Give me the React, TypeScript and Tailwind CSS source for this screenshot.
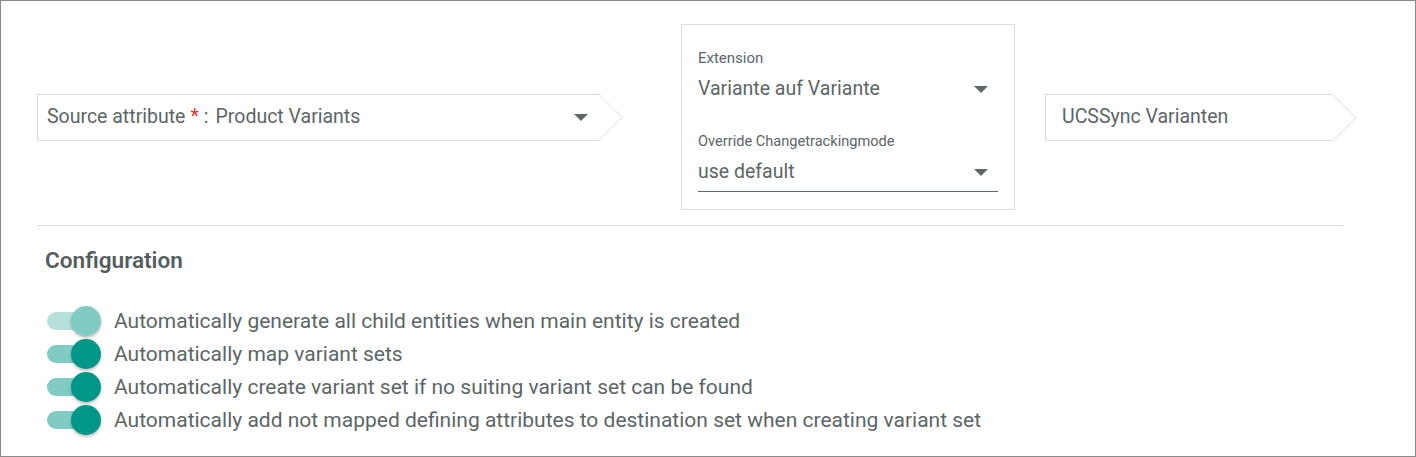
const font = { fontFamily: "Roboto, 'Liberation Sans', sans-serif" };

function Caret() {
  return (
    <svg width="14" height="7" viewBox="0 0 14 7" className="shrink-0">
      <path d="M0 0 L14 0 L7 7 Z" fill="#5f6868" />
    </svg>
  );
}

function ArrowBox({ width, children }: { width: string; children: React.ReactNode }) {
  return (
    <div className={`flex h-[47px] shrink-0 ${width}`}>
      <div className="flex flex-1 items-center border-y border-l border-[#dcdcdc] bg-white">
        {children}
      </div>
      <svg width="25" height="47" viewBox="0 0 25 47" className="shrink-0">
        <path d="M0 0.5 L1 0.5 L24 23.5 L1 46.5 L0 46.5" fill="none" stroke="#dcdcdc" strokeWidth="1" />
      </svg>
    </div>
  );
}

function Toggle({ muted }: { muted?: boolean }) {
  return (
    <div className="relative h-[30px] w-[54px] shrink-0">
      <div
        className={`absolute left-0 top-[6px] h-[18px] w-[48px] rounded-full ${
          muted ? "bg-[#b5e0dc]" : "bg-[#80cbc4]"
        }`}
      />
      <div
        className={`absolute left-[24px] top-0 h-[30px] w-[30px] rounded-full shadow-[0_2px_3px_rgba(0,0,0,0.25)] ${
          muted ? "bg-[#80cbc4]" : "bg-[#009688]"
        }`}
      />
    </div>
  );
}

const options = [
  { label: "Automatically generate all child entities when main entity is created", muted: true },
  { label: "Automatically map variant sets" },
  { label: "Automatically create variant set if no suiting variant set can be found" },
  { label: "Automatically add not mapped defining attributes to destination set when creating variant set" },
];

export default function App() {
  return (
    <div style={font} className="h-[457px] w-[1416px] overflow-hidden border border-[#8a8a8a] bg-white text-[#5c6666]">
      <div className="pl-[36px] pr-[72px] pt-[23px]">
        <div className="flex items-center">
          <ArrowBox width="w-[586px]">
            <div className="flex flex-1 items-center pl-[9px] pr-[10px] text-[19.5px]">
              <span>Source attribute</span>
              <span className="ml-[5px] text-[#e53935]">*</span>
              <span className="ml-[5px]">:</span>
              <span className="ml-[7px] flex-1">Product Variants</span>
              <Caret />
            </div>
          </ArrowBox>

          <div className="ml-[58px] flex h-[186px] w-[334px] shrink-0 flex-col border border-[#dcdcdc] px-[16px] pt-[23px]">
            <div className="text-[15px] leading-[20px]">Extension</div>
            <div className="mt-[8px] flex items-center pr-[10px]">
              <span className="flex-1 text-[19.5px] leading-[26px]">Variante auf Variante</span>
              <Caret />
            </div>
            <div className="mt-[29px] text-[14.6px] leading-[20px]">Override Changetrackingmode</div>
            <div className="mt-[8px] flex items-center border-b border-[#5f6868] pb-[6px] pr-[10px]">
              <span className="flex-1 text-[19.5px] leading-[26px]">use default</span>
              <Caret />
            </div>
          </div>

          <div className="ml-[30px] shrink-0">
            <ArrowBox width="w-[312px]">
              <span className="pl-[16px] text-[19.5px]">UCSSync Varianten</span>
            </ArrowBox>
          </div>
        </div>

        <div className="mt-[15px] h-px bg-[#dcdcdc]" />

        <h2 className="mt-[21px] pl-[8px] text-[22.6px] font-semibold leading-[28px] text-[#555e5e]">
          Configuration
        </h2>

        <div className="mt-[31px] flex flex-col gap-[3px] pl-[10px]">
          {options.map((o) => (
            <div key={o.label} className="flex items-center">
              <Toggle muted={o.muted} />
              <span className="ml-[13px] text-[21px] leading-[30px]">{o.label}</span>
            </div>
          ))}
        </div>
      </div>
    </div>
  );
}
